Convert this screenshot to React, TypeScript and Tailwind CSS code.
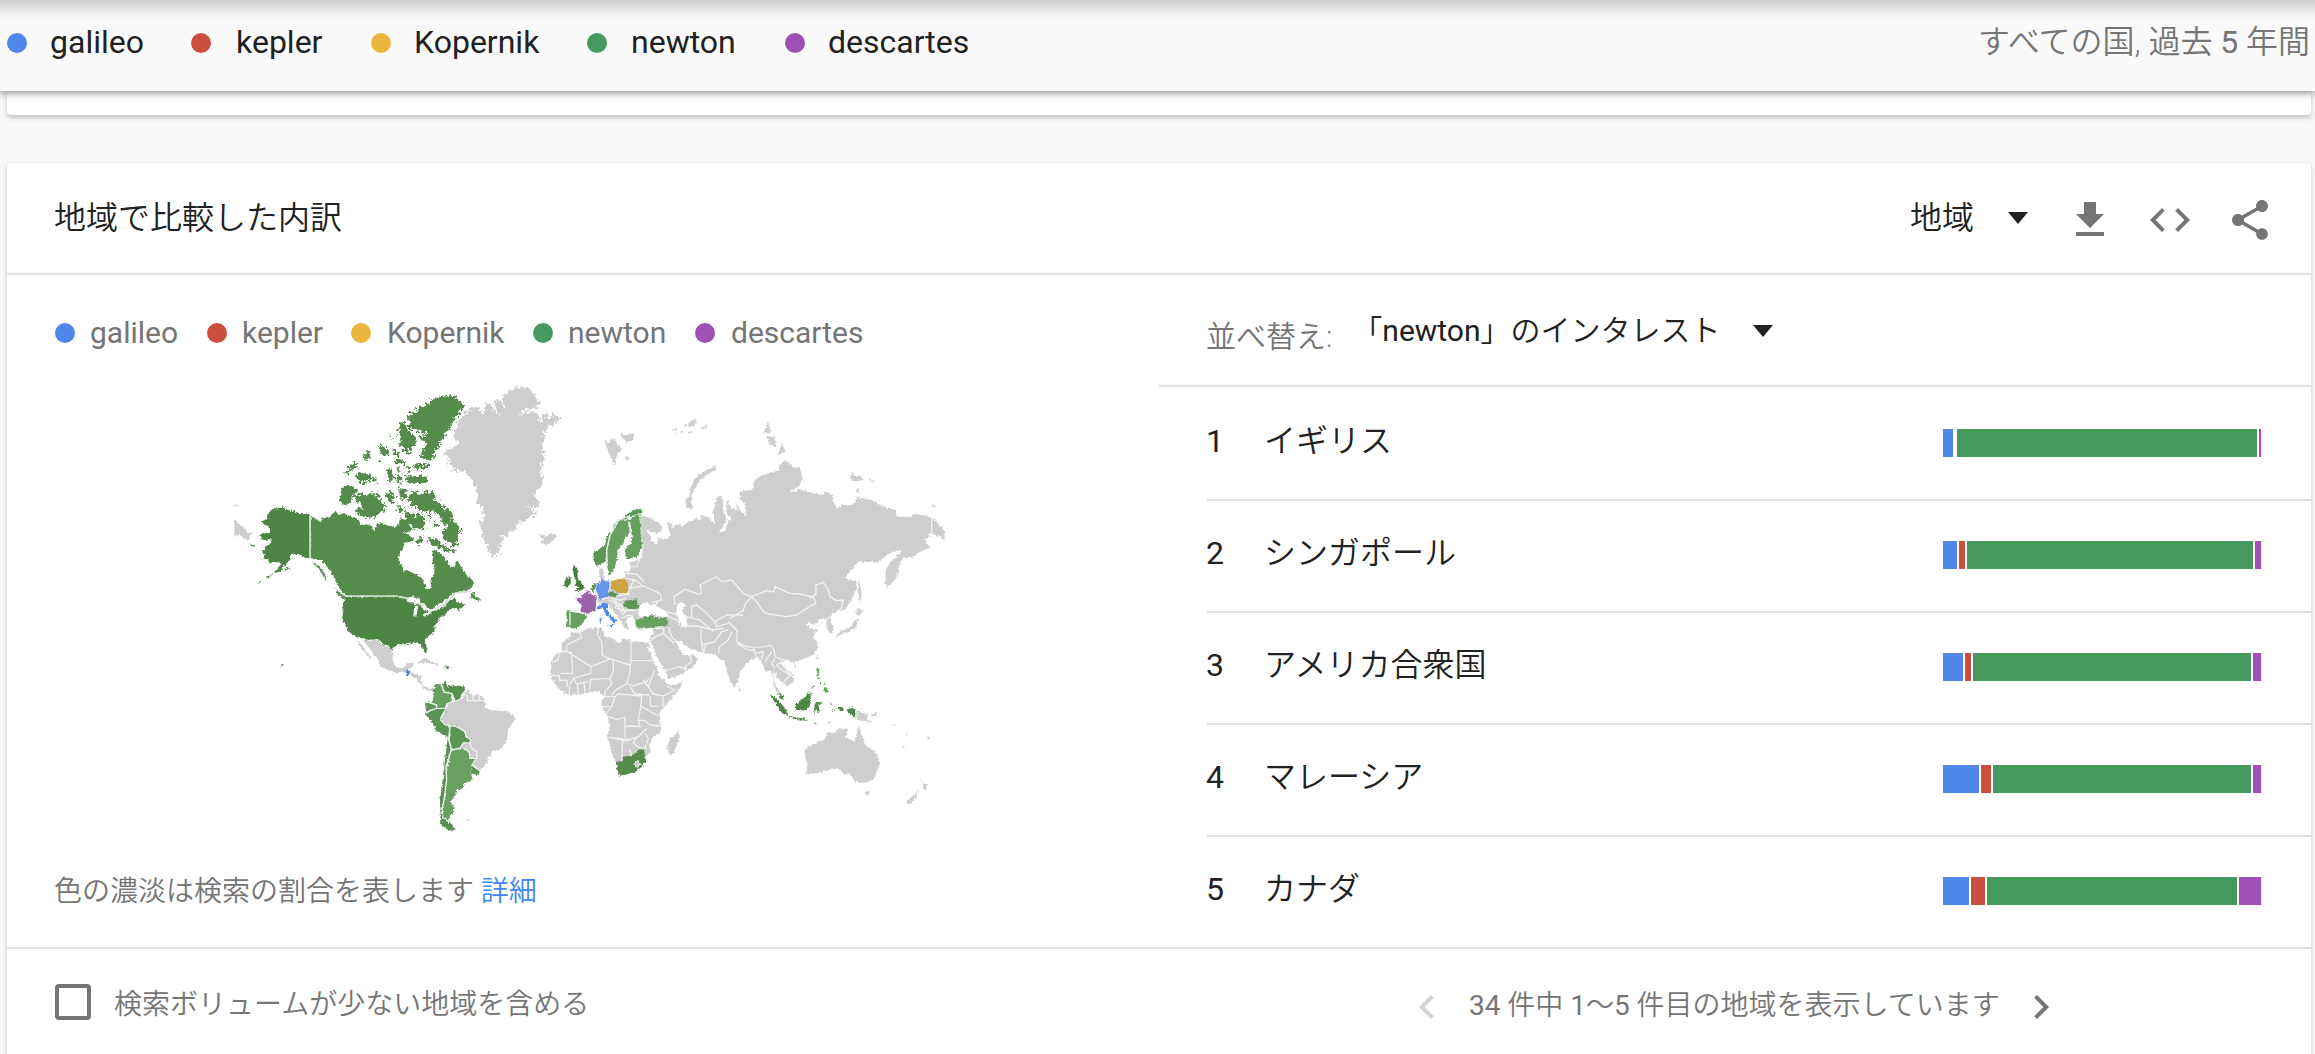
import React from "react";

const FONT = "font-['Roboto','Noto_Sans_CJK_JP',sans-serif]";

const TERMS = [
  { name: "galileo", dot: "bg-[#5086ec]", head: "w-[184px] gap-[23px]", legend: "w-[152px] gap-[15px]" },
  { name: "kepler", dot: "bg-[#ca4f3f]", head: "w-[180px] gap-[25px]", legend: "w-[144px] gap-[15px]" },
  { name: "Kopernik", dot: "bg-[#ebb63e]", head: "w-[216px] gap-[23px]", legend: "w-[182px] gap-[16px]" },
  { name: "newton", dot: "bg-[#479a5f]", head: "w-[198px] gap-[24px]", legend: "w-[162px] gap-[15px]" },
  { name: "descartes", dot: "bg-[#9f50b5]", head: "w-[200px] gap-[23px]", legend: "w-[180px] gap-[16px]" },
];

const BAR_COLORS = ["bg-[#5086ec]", "bg-[#ca4f3f]", "bg-[#479a5f]", "bg-[#9f50b5]"];

const ROWS = [
  { name: "イギリス", parts: [10, 0, 300, 2] },
  { name: "シンガポール", parts: [14, 6, 286, 6] },
  { name: "アメリカ合衆国", parts: [20, 6, 278, 8] },
  { name: "マレーシア", parts: [36, 10, 258, 8] },
  { name: "カナダ", parts: [26, 14, 250, 22] },
];

function Icon({ d, className = "" }: { d: string; className?: string }) {
  return (
    <svg viewBox="0 0 24 24" className={`size-12 shrink-0 fill-current ${className}`}>
      <path d={d} />
    </svg>
  );
}

function Triangle({ className = "" }: { className?: string }) {
  return (
    <svg viewBox="0 0 20 12" className={`h-3 w-5 shrink-0 fill-[#212121] ${className}`}>
      <path d="M0 0h20L10 12z" />
    </svg>
  );
}

const GRAY = "#cecece";
const US = "#4d8545";
const CA = "#548b4c";
const MID = "#5b9656";
const LIGHT = "#67a061";

function WorldMap() {
  return (
    <svg viewBox="225 380 725 460" className="h-[460px] w-[725px]" strokeLinejoin="round">
      <defs>
        <filter id="coast" x="-5%" y="-5%" width="110%" height="110%">
          <feTurbulence type="fractalNoise" baseFrequency="0.14" numOctaves="3" seed="4" />
          <feDisplacementMap in="SourceGraphic" scale="12" xChannelSelector="R" yChannelSelector="G" />
        </filter>
        <filter id="fjord" x="-5%" y="-5%" width="110%" height="110%">
          <feTurbulence type="fractalNoise" baseFrequency="0.11" numOctaves="3" seed="9" />
          <feDisplacementMap in="SourceGraphic" scale="30" xChannelSelector="R" yChannelSelector="G" />
        </filter>
      </defs>

      {/* North America */}
      <g transform="translate(225 380) scale(.33333)">
        <g filter="url(#coast)">
          <path fill={US} d="M255 405L243 400 235 403 222 400 210 393 195 392 178 385 168 380 160 385 148 385 135 393 125 410 128 418 108 424 112 430 130 438 135 445 135 458 128 460 115 458 105 465 112 472 105 478 120 480 135 478 140 480 135 492 120 500 112 515 118 525 115 537 130 538 135 550 148 545 165 548 170 550 160 565 148 580 165 572 180 555 190 545 200 535 195 528 203 520 215 525 225 522 240 533 255 535Z" />
          <path fill={US} d="M145 580L125 592 122 596 140 588ZM115 598L102 606 104 608ZM75 493L92 497 90 500 78 497ZM185 560L196 566 184 570 176 568ZM168 853L173 857 170 861ZM105 535L111 537 108 540Z" />
          <path fill={CA} d="M257 407L290 425 288 410 300 415 315 408 325 400 332 392 340 405 355 400 360 402 375 408 395 415 405 425 405 435 420 433 440 438 448 455 455 430 470 430 490 437 515 442 522 430 525 412 535 418 545 420 555 425 550 435 560 445 555 455 530 458 550 462 570 478 555 485 540 488 535 500 525 520 520 540 530 555 535 572 545 570 565 580 590 590 595 605 605 625 615 628 620 610 618 595 628 580 628 560 620 550 625 530 622 512 635 512 655 530 665 540 670 555 685 562 697 540 705 555 720 580 740 598 748 615 735 628 700 635 685 640 665 658 640 672 620 690 610 685 600 672 580 668 575 655 560 650 545 655 525 650 365 648 355 640 340 620 325 590 310 565 290 540 265 540 255 532Z" />
          <path fill={CA} d="M260 540L272 552 286 560 302 590 308 606 300 600 288 574 270 555ZM328 622L345 640 362 650 356 660 338 642ZM735 655L745 635 750 648 763 655 765 665 750 658ZM668 675L690 655 695 665 722 675 700 690 690 682 672 690Z" />
        </g>
        <g filter="url(#fjord)">
          <path fill={CA} d="M600 75L625 58 650 47 685 48 700 58 716 78 712 92 695 108 685 130 665 155 655 175 640 190 645 200 630 215 625 235 610 245 595 235 585 225 592 210 610 195 600 190 585 178 580 165 595 170 605 160 585 152 565 152 548 140 560 125 545 112 560 97 580 95 575 85 590 80Z" />
          <path fill={CA} d="M535 122L545 140 555 160 572 165 575 185 560 200 550 222 540 215 530 205 520 190 528 175 515 160 525 145 522 135Z" />
          <path fill={CA} d="M463 190L480 200 495 215 498 232 482 228 468 215ZM505 205L520 218 520 232 508 225ZM415 225L435 210 432 240 420 238ZM362 278L378 255 392 248 398 262 380 270 370 282ZM392 285L410 275 420 285 435 280 440 292 455 290 455 305 430 300 415 312 400 300ZM484 270L500 265 503 285 512 292 500 305 485 295ZM515 288L528 290 530 310 518 308ZM538 280L555 292 570 288 595 288 608 295 605 310 580 310 550 312ZM565 250L590 252 612 250 612 265 590 270 565 262ZM545 255L558 262 560 275 545 268ZM495 165L500 180 494 176ZM458 235L466 240 464 252ZM505 240L540 238 538 252 510 252ZM510 262L525 262 522 275Z" />
          <path fill={CA} d="M387 352L405 340 425 348 440 335 450 345 462 340 465 365 482 380 478 395 465 395 450 410 425 415 395 400 398 385 415 380 400 370ZM480 345L500 335 510 350 500 375 490 360ZM523 325L545 328 545 355 530 360 522 345ZM518 372L535 385 530 400 518 392Z" />
          <path fill={CA} d="M553 340L568 330 580 335 582 350 595 335 625 335 632 350 625 360 650 370 655 385 670 385 685 405 685 425 710 450 695 470 700 500 682 490 665 488 652 470 655 450 670 440 655 430 648 415 640 400 615 395 600 398 580 385 560 378 552 360ZM540 395L560 400 575 410 580 395 595 410 600 425 595 445 580 450 570 440 560 445 545 425ZM570 478L590 470 598 485 580 492ZM608 405L620 410 612 425ZM625 432L638 428 640 440 628 442ZM610 475L640 475 640 482 660 500 695 510 695 515 665 515 650 505 632 498 612 490Z" />
        </g>
        <g filter="url(#coast)">
          <path fill={CA} d="M350 322L370 315 385 322 400 330 385 345 375 368 362 378 345 362Z" />
          <path fill={US} d="M362 650L520 650 545 656 552 662 575 668 600 680 612 695 640 690 660 678 668 660 685 655 690 665 688 680 670 690 660 705 645 712 640 725 630 735 628 755 610 768 600 778 600 790 607 805 605 820 595 812 590 795 578 787 560 790 545 793 520 792 505 805 500 815 490 800 475 795 460 780 430 782 410 775 395 772 375 758 360 735 353 715 352 690 355 665Z" />
          <path fill="#fff" d="M540 662L562 648 585 656 586 668 570 672 556 668ZM568 680L580 675 575 706 565 708ZM584 674L600 678 612 686 603 694 592 684ZM592 704L615 692 622 696 600 710ZM619 690L635 687 632 692Z" />
          <path fill={GRAY} d="M410 777L430 784 460 782 475 797 490 800 503 818 503 840 510 858 525 865 540 862 548 850 567 848 562 862 550 868 545 878 530 875 515 880 490 870 465 858 460 840 450 828 440 812 425 795ZM396 775L408 790 420 808 438 835 430 832 415 812 402 795ZM552 872L568 882 590 888 588 905 600 920 615 924 630 930 625 936 605 932 585 912 572 895 560 892ZM575 845L600 836 625 845 645 855 635 857 610 848 580 849ZM650 858L690 864 660 866ZM28 373L42 377 30 383ZM28 420L60 445 68 458 84 460 72 468 75 480 60 478 45 462 28 472Z" />
          <path fill={MID} d="M660 855L674 860 664 866Z" />
          <path fill="#3f7de8" d="M543 872L554 870 552 888 541 888 548 880Z" />
        </g>
        <path d="M255 407V533M362 648H520M522 650L552 656M575 670L600 672M628 690L665 668 690 640 735 634M660 680L665 660" fill="none" stroke="#d5e3d3" strokeWidth="5" />
        <path d="M393 773L430 781 460 779 478 796 490 797 502 816" fill="none" stroke="#eee" strokeWidth="3" />
      </g>

      {/* Greenland, Iceland and South America */}
      <g transform="translate(430 380) scale(.33333)">
        <path filter="url(#fjord)" fill={GRAY} d="M72 155L85 130 92 110 108 98 125 84 145 80 160 102 170 88 165 72 178 70 192 90 205 108 198 85 190 65 205 60 222 80 215 50 225 42 240 30 262 22 290 22 310 40 330 68 325 82 300 88 275 95 270 105 295 98 320 95 325 118 335 125 345 95 355 120 372 100 390 115 375 130 355 140 345 160 342 190 335 205 345 225 340 250 330 270 340 300 335 320 310 345 325 360 328 385 290 378 322 398 310 410 285 420 265 430 255 450 235 458 220 470 215 495 200 530 180 520 165 490 158 470 150 430 165 410 158 385 142 370 140 340 132 310 115 285 95 272 60 275 75 262 50 250 62 240 38 218 60 205 80 195 82 178 70 168Z" />
        <path filter="url(#coast)" fill={GRAY} d="M325 460L338 465 345 472 365 460 380 465 372 480 350 494 330 485 340 480ZM108 1318L122 1322 112 1326Z" />
        <g filter="url(#coast)">
          <path fill={GRAY} d="M60 965L95 960 112 930 130 945 150 942 165 960 165 980 190 992 225 992 250 1005 255 1020 235 1045 230 1080 215 1105 190 1112 175 1130 170 1150 150 1170 130 1155 95 1105 60 1060 30 1020Z" />
          <path fill="#55904d" d="M35 912L48 905 52 920 75 915 100 918 108 932 95 945 92 958 75 965 65 940 45 935Z" />
          <path fill={LIGHT} d="M33 908L42 935 66 940 65 965 48 975 50 1000 30 985 5 968 12 945 8 930 18 912Z" />
          <path fill={MID} d="M-15 968L0 965 15 972 20 985 0 990 -12 1000Z" />
          <path fill="#5a9452" d="M0 992L22 978 48 985 38 1000 32 1015 45 1033 58 1040 55 1075 20 1052 5 1028 -12 1005 -12 995Z" />
          <path fill={MID} d="M60 1036L80 1040 105 1055 108 1070 122 1075 120 1088 100 1088 90 1105 65 1108 58 1080Z" />
          <path fill={GRAY} d="M100 1092L118 1090 128 1105 140 1115 138 1135 120 1132 118 1115 98 1105Z" />
          <path fill={LIGHT} d="M62 1110L95 1105 118 1120 120 1138 142 1132 125 1155 122 1175 128 1200 100 1212 98 1228 78 1230 80 1240 62 1265 75 1285 55 1322 40 1310 38 1280 48 1240 48 1190Z" />
          <path fill={MID} d="M125 1158L150 1172 142 1185 122 1180Z" />
          <path fill="#589252" d="M52 1078L60 1085 62 1112 50 1150 50 1200 42 1260 35 1290 38 1318 62 1330 75 1350 55 1352 30 1330 32 1290 30 1260 38 1200Z" />
        </g>
        <path fill="none" stroke="#f1f1f1" strokeWidth="4" d="M33 910L42 936 66 941 68 965 50 972 50 985 34 1010 32 1020 45 1034 60 1036 80 1040 105 1055 108 1070 122 1078 120 1090 100 1088 90 1106 64 1110 57 1078 60 1038M108 930L95 945 92 957 75 964 66 942M-10 965L20 975 20 985 0 992-12 1000M64 1110L48 1160 50 1200 42 1260 35 1290M100 1104L118 1116 120 1134 140 1136 140 1115 124 1104 120 1090M140 1134L126 1155 150 1172M112 945L112 962 130 962 128 945M130 962L148 962 148 942M150 962L165 962M20 985L50 985" />
      </g>

      {/* Asia and Oceania */}
      <g transform="translate(600 400) scale(.33333)">
        <g filter="url(#coast)">
          <path fill={GRAY} d="M120 340L130 348 160 358 185 375 187 390 175 400 150 395 135 388 155 410 150 420 170 432 175 415 200 418 212 405 205 385 200 365 215 370 215 385 240 370 245 380 265 365 290 355 305 362 300 345 325 352 345 372 340 340 345 310 355 285 370 295 368 330 380 355 372 375 360 395 375 395 385 360 400 360 410 385 400 370 390 350 380 345 380 300 395 325 415 332 405 305 425 335 438 345 435 315 420 295 420 273 458 270 460 245 480 228 510 218 535 212 540 195 557 180 575 200 600 205 607 235 600 255 565 280 600 268 635 280 670 285 675 272 697 285 700 305 712 328 725 312 740 318 765 310 770 290 815 300 850 320 885 330 890 350 935 352 940 342 975 345 1005 360 1035 395 1033 420 1010 405 995 400 975 420 990 445 960 455 940 472 910 475 900 490 890 530 880 545 862 565 855 545 858 510 875 480 890 470 905 450 880 455 860 465 835 487 775 485 735 533 750 540 770 545 768 570 755 600 735 630 722 630 700 640 690 650 700 680 695 700 680 690 678 670 685 660 670 655 655 662 640 675 628 665 620 675 640 690 655 685 645 700 640 710 655 735 655 745 640 765 615 775 590 785 570 785 555 780 545 790 560 805 580 825 580 845 562 858 550 850 535 835 525 825 520 810 520 840 530 862 542 878 536 880 525 865 520 848 515 820 510 810 500 818 490 800 485 785 475 775 460 775 445 785 420 815 412 850 402 862 390 840 378 810 375 780 362 780 355 770 340 762 315 760 285 750 260 740 245 725 225 722 235 740 250 765 268 768 275 762 295 775 280 800 240 825 205 838 195 810 170 770 155 730 150 715 160 700 163 683 108 687 105 660 95 650 82 655 78 665 88 690 72 682 62 665 50 645 25 615 0 612 -20 605 -15 590 0 545 5 535 -2 510 8 500 12 535 30 545 60 540 75 530 72 515 85 515 92 505 90 487 115 482 125 470 130 440 118 400 122 345Z" />
          <path fill={GRAY} d="M260 325L255 300 268 290 272 260 285 235 310 215 345 198 348 208 325 222 300 240 288 260 275 285 272 305 280 325ZM490 100L505 65 515 100ZM498 108L522 112 530 140 510 135ZM545 130L558 155 533 165ZM12 118L28 128 40 110 50 130 65 150 50 165 45 200 35 175 20 145ZM62 100L80 105 102 100 100 120 80 128 65 115ZM75 165L88 175 80 185ZM748 225L760 218 768 235 778 225 792 238 775 245 755 242ZM805 235L825 243 812 245ZM765 275L772 265 780 278ZM990 320L1002 314 1008 320ZM776 535L785 580 780 612 775 580ZM772 625L792 632 780 645 768 642ZM775 655L770 680 748 695 728 700 705 715 718 695 745 685 762 665ZM650 765L656 770 650 782ZM415 860L424 872 418 876ZM582 795L590 798 584 803ZM212 90L235 85 230 92ZM225 100L232 96 228 103ZM250 78L262 72 258 80ZM265 68L290 55 285 75 268 82ZM262 100L270 92 278 98ZM300 85L325 75 310 88ZM240 98L250 94 246 102Z" />
          <path fill={GRAY} d="M612 1050L640 1032 670 1020 685 998 705 1000 715 985 745 988 735 1010 765 1025 775 975 785 1005 795 1035 830 1060 840 1090 820 1140 790 1150 765 1145 750 1120 735 1125 715 1105 680 1110 650 1120 620 1122 622 1095ZM793 1172L810 1174 802 1190ZM955 1130L968 1142 972 1152 985 1152 978 1170 965 1165 970 1150ZM955 1172L950 1190 930 1212 918 1210 935 1190ZM770 928L790 940 805 945 800 955 822 970 795 962 770 960ZM808 945L830 938 832 942 815 950ZM880 970L888 978 883 976ZM905 1030L918 1042 914 1042ZM918 998L922 1010 918 1006ZM980 1010L990 1010 984 1016ZM680 968L695 962 690 970Z" />
          <path fill={US} d="M505 882L520 888 545 912 562 935 564 948 545 938 530 912ZM584 908L600 910 620 900 630 888 634 905 625 925 615 932 590 930ZM645 912L650 905 670 908 655 915 660 930 655 940 648 925 644 945 642 925ZM738 930L755 922 767 930 768 955 752 942ZM715 920L728 922 732 932 718 930ZM565 948L585 952 610 955 625 962 600 960 570 953ZM640 968L652 970 645 972ZM692 905L696 915 692 914ZM695 930L705 932 698 934Z" />
          <path fill={US} d="M534 880L548 885 551 900 540 895ZM595 905L615 892 622 878 638 878 630 888 618 902 600 912Z" />
          <path fill={LIGHT} d="M650 805L658 805 658 822 652 830ZM650 832L662 834 660 838ZM660 842L664 852 660 852ZM672 845L678 855 674 858ZM668 870L682 862 684 876 676 878ZM630 868L645 852 642 860Z" />
        </g>
        <g transform="translate(-210 270)">
          <path filter="url(#coast)" fill="#fff" d="M325 372L326 352 338 342 350 336 360 345 372 343 385 335 378 348 405 362 418 378 400 382 375 376 345 380 330 386ZM440 345L455 335 468 345 455 365 470 380 472 410 455 412 445 390 440 365Z" />
        </g>
        <path fill="none" stroke="#f1f1f1" strokeWidth="4" d="M225 615L222 590 240 578 255 568 295 582 305 580 300 555 350 530 365 545 395 540 430 580 455 590 435 612 430 632 390 655M272 620L290 615 320 640 345 665 380 645 430 645M260 650L300 660 340 695M275 620V655M345 665L350 680 385 670M455 590L500 572 522 576 525 560 570 580 600 582 640 592 648 610 625 622 590 645 560 650 505 642 490 635 470 605 455 590M630 595L648 582 648 555 670 547 685 570 690 590 710 602 730 600 722 628 710 635M648 682L690 650M385 665L412 692 410 725 435 738 460 742 500 740 512 735 522 750 525 770 550 780 570 782M412 730L440 748 460 752M460 742L470 775M470 760L490 755 485 778M515 755L495 785M525 775L515 790 525 805M548 785L530 795 545 810 570 825 550 848M540 785L560 810 578 830M525 835L530 815M302 688L305 730 310 760M305 735L345 725 365 695 385 690M355 760L358 740 385 720 395 695M240 680L290 678 340 690 370 685M310 760L318 735M163 685L192 685 190 700 162 712M190 700L222 730M205 680L215 710 230 725M195 812L240 800 258 808 255 800 275 785 270 765M255 800L258 815M203 650L230 660 240 672M200 635L235 645M82 565L130 558 180 580 185 600 155 608M70 535L105 540 130 558M75 520L110 522 132 545M90 500L110 500 118 480M102 540L88 568M130 440L118 480M88 565L82 585M30 595L60 600 80 595M45 610L60 625 70 645M25 600L50 610M75 630L110 630M65 655L85 645 100 650M50 625L70 632M995 350V415M768 928V960M35 590L80 582" />
      </g>

      {/* Europe and Africa */}
      <g transform="translate(530 490) scale(.33333)">
        <g filter="url(#coast)">
          <path fill={GRAY} d="M125 425L150 428 175 415 215 413 222 425 220 435 245 445 270 460 280 445 305 452 355 458 362 475 352 470 365 500 380 530 385 555 410 580 425 587 457 575 450 595 425 625 400 650 388 670 392 705 393 725 365 745 358 765 362 785 345 800 348 810 335 830 315 847 270 857 262 840 258 815 245 790 240 765 230 742 238 715 235 685 230 670 215 650 215 635 222 620 210 605 185 605 160 612 115 615 90 600 75 580 60 555 65 530 62 518 75 495 95 480 95 460 120 440ZM445 716L450 740 430 790 418 795 412 775 418 745 435 735Z" />
          <path fill="#548b4c" d="M258 815L277 815 278 800 305 797 330 778 342 778 345 800 348 808 335 830 315 847 270 857 262 840Z" />
          <path fill={GRAY} stroke="#f1f1f1" strokeWidth="3" d="M312 820L324 812 331 822 320 831Z" />
          <path fill={MID} d="M190 185L210 175 225 165 232 135 245 120 262 92 285 78 305 62 330 55 338 65 320 75 298 78 285 88 268 95 258 110 240 135 235 160 228 185 225 215 200 228 192 215Z" />
          <path fill={LIGHT} d="M290 92L298 100 300 130 285 145 275 165 262 180 262 205 250 245 238 255 230 225 228 195 235 165 240 138 262 105 270 92Z" />
          <path fill={LIGHT} d="M275 82L300 90 310 80 328 72 330 105 332 145 338 172 320 200 290 208 284 180 305 158 305 130 300 100Z" />
          <path fill="#457c3c" d="M130 226L138 230 145 245 142 262 158 285 165 295 150 302 133 304 145 292 135 285 140 270 130 255Z" />
          <path fill="#4d8545" d="M105 265L122 262 122 280 115 292 102 292Z" />
          <path fill={LIGHT} d="M108 363L130 365 170 372 165 388 155 405 130 417 118 410 108 410 110 385Z" />
          <path fill="#9b63ab" d="M135 322L152 325 158 315 172 300 182 312 203 320 198 340 200 362 185 365 170 372 150 365 155 345Z" />
          <path fill="#6395ea" d="M200 280L212 276 215 265 225 275 240 270 242 295 232 300 238 320 205 328 205 310 196 305Z" />
          <path fill={MID} d="M183 300L190 282 198 280 196 295 190 308ZM232 310L245 305 264 312 255 320 238 318ZM285 332L320 328 328 355 310 358 290 355 282 345ZM312 378L322 377 318 382Z" />
          <path fill="#cfa243" d="M243 275L262 267 292 270 296 298 290 312 270 310 246 298Z" />
          <path fill="#4f86ec" d="M200 350L215 338 233 338 235 350 228 355 240 375 262 390 255 395 255 405 245 390 228 375 218 355 202 358ZM232 405L248 405 246 412ZM209 383L215 383 213 398 209 397Z" />
          <path fill={LIGHT} d="M315 390L340 382 362 376 385 385 410 382 416 408 375 412 345 415 320 412Z" />
          <path fill={GRAY} d="M208 240L218 235 216 262 208 262Z" />
        </g>
        <path fill="none" stroke="#f1f1f1" strokeWidth="4" d="M150 428L155 443 110 465 110 483 88 487 85 510 65 517M110 483L183 530 245 505M112 487H124L128 550H92M205 415L202 435 215 455 217 495 235 505 300 525M250 507V545L240 565 182 568 178 600M183 530L182 550 130 565 118 585M303 452V512H368M303 512L298 555 290 580 310 588 350 575 356 565M374 540L360 575 355 590 370 612 400 618 435 600 410 588M245 615L260 598 290 582M300 590L315 612 358 615M240 567L245 582 225 605 222 620H255L265 612 335 618 332 650 325 690 330 710 300 708 285 710 285 682 260 688 235 680M255 620L245 650 230 668M230 742L300 748 325 740 350 715M285 712V740M248 745L278 750 275 810M320 742L310 758 325 772 348 775M345 730L355 745 345 775M335 650L385 678M325 690L345 692 360 705 392 708M360 620L362 648 385 650M400 620L398 650M118 615L118 588M145 612L142 582M165 610L162 575M88 572L110 570 112 590M130 565L140 582 175 575M62 555L88 558 90 575M215 650L240 650M298 778L305 797M277 752H300M355 590L340 570M200 350L218 336M203 320L200 340M196 300L203 322 198 362M170 371L120 363M120 368V405M232 228L230 180 240 135 265 92 290 80M298 95L302 130M215 328L238 322M240 270V298M270 312L300 312M250 330L275 345 285 370M264 345L280 350M282 362L312 362M262 340L255 355M375 412L400 410M355 458L375 440" />
      </g>
    </svg>
  );
}

export default function App() {
  return (
    <div className={`flex h-[1054px] w-[2315px] flex-col overflow-hidden bg-[#f7f7f7] text-[#212121] ${FONT}`}>
      <header className="z-10 flex h-[91px] shrink-0 items-start justify-between bg-[#fafafa] bg-[linear-gradient(#cdcdcd_0px,#d6d6d6_4px,#ebebeb_12px,#f6f6f6_18px,#fafafa_24px)] pr-[5px] pl-[7px] shadow-[0_1px_8px_rgba(0,0,0,0.55)]">
        <div className="flex h-[86px] items-center">
          {TERMS.map((t) => (
            <div key={t.name} className={`flex items-center ${t.head}`}>
              <span className={`size-5 shrink-0 rounded-full ${t.dot}`} />
              <span className="mb-0.5 text-[32px] leading-[48px]">{t.name}</span>
            </div>
          ))}
        </div>
        <div className="flex h-[84px] items-center text-[32px] font-[350] text-[#757575]">
          <p>
            すべての国, 過去 <span className="font-normal">5</span> 年間
          </p>
        </div>
      </header>

      <div className="mr-1 ml-[7px] h-6 shrink-0 rounded-b-[4px] bg-white shadow-[0_3px_4px_rgba(0,0,0,0.2)]" />

      <main className="mt-12 mr-1 ml-[7px] flex h-[920px] shrink-0 flex-col rounded-t-[4px] bg-white shadow-[0_2px_4px_rgba(0,0,0,0.2)]">
        <div className="flex h-28 shrink-0 items-center justify-between border-b-2 border-[#e0e0e0] pr-[37px] pl-[47px]">
          <h1 className="text-[32px] font-[350]">地域で比較した内訳</h1>
          <div className="flex items-center text-[#757575]">
            <span className="text-[32px] font-[350] text-[#212121]">地域</span>
            <Triangle className="ml-[34px]" />
            <Icon className="mt-1 ml-[38px]" d="M19 9h-4V3H9v6H5l7 7 7-7zM5 18v2h14v-2H5z" />
            <Icon className="mt-1 ml-8" d="M9.4 16.6L4.8 12l4.6-4.6L8 6l-6 6 6 6 1.4-1.4zm5.2 0l4.6-4.6-4.6-4.6L16 6l6 6-6 6-1.4-1.4z" />
            <Icon className="mt-1 ml-8" d="M18 16.08c-.76 0-1.44.3-1.96.77L8.91 12.7c.05-.23.09-.46.09-.7s-.04-.47-.09-.7l7.05-4.11c.54.5 1.25.81 2.04.81 1.66 0 3-1.34 3-3s-1.34-3-3-3-3 1.34-3 3c0 .24.04.47.09.7L8.04 9.81C7.5 9.31 6.79 9 6 9c-1.66 0-3 1.34-3 3s1.34 3 3 3c.79 0 1.5-.31 2.04-.81l7.12 4.16c-.05.21-.08.43-.08.65 0 1.61 1.31 2.92 2.92 2.92 1.61 0 2.92-1.31 2.92-2.92s-1.31-2.92-2.92-2.92z" />
          </div>
        </div>

        <div className="flex h-[674px] shrink-0 border-b-2 border-[#e0e0e0]">
          <section className="flex w-[1152px] flex-col pl-12">
            <div className="mt-[34px] flex h-12 items-center text-[#757575]">
              {TERMS.map((t) => (
                <div key={t.name} className={`flex items-center ${t.legend}`}>
                  <span className={`size-5 shrink-0 rounded-full ${t.dot}`} />
                  <span className="mb-0.5 text-[30px]">{t.name}</span>
                </div>
              ))}
            </div>
            <div className="mt-[23px] ml-[170px]">
              <WorldMap />
            </div>
            <p className="mt-[31px] -ml-px text-[28px] leading-[42px] font-[350] text-[#757575]">
              色の濃淡は検索の割合を表します <a className="text-[#4285f4]">詳細</a>
            </p>
          </section>

          <section className="flex w-[1152px] flex-col">
            <div className="flex h-28 items-start border-b-2 border-[#e0e0e0] pl-[47px]">
              <span className="mt-[41px] text-[30px] leading-[42px] font-[350] text-[#757575]">並べ替え:</span>
              <span className="mt-[34px] ml-[20px] text-[30px] leading-[44px]">
                <span className="font-[350]">「</span>newton<span className="font-[350]">」のインタレスト</span>
              </span>
              <Triangle className="mt-[50px] ml-[32px]" />
            </div>
            <ol className="ml-12">
              {ROWS.map((row, i) => (
                <li
                  key={row.name}
                  className={`flex h-28 items-start border-[#e0e0e0] ${i === 0 ? "pt-0.5" : "border-t-2"}`}
                >
                  <span className="mt-7 -ml-px w-[58px] text-[32px] leading-[48px]">{i + 1}</span>
                  <span className="mt-7 flex-1 text-[32px] leading-[48px] font-[350]">{row.name}</span>
                  <div className="mt-10 mr-12 flex h-7 w-80 gap-[2px] border-r-2 border-[#eeeeee]">
                    {row.parts.map((w, k) => (
                      <div key={k} className={`h-full shrink-0 ${BAR_COLORS[k]}`} style={{ width: w }} />
                    ))}
                  </div>
                </li>
              ))}
            </ol>
          </section>
        </div>

        <footer className="flex h-[110px] items-center text-[28px] font-[350] text-[#757575]">
          <label className="flex w-[1152px] items-center gap-[23px] pl-12">
            <span className="mb-1 size-9 rounded-[4px] border-4 border-[#757575]" />
            <span className="mt-0.5">検索ボリュームが少ない地域を含める</span>
          </label>
          <div className="ml-[244px] flex items-center">
            <Icon className="mt-1.5 text-[#d2d2d2]" d="M15.41 7.41L14 6l-6 6 6 6 1.41-1.41L10.83 12z" />
            <span className="mt-1 ml-[18px] w-[530px] whitespace-nowrap">
              <span className="font-normal">34</span> 件中 <span className="font-normal">1</span>〜
              <span className="font-normal">5</span> 件目の地域を表示しています
            </span>
            <Icon className="mt-1.5 ml-[18px]" d="M10 6L8.59 7.41 13.17 12l-4.58 4.59L10 18l6-6z" />
          </div>
        </footer>
      </main>
    </div>
  );
}
